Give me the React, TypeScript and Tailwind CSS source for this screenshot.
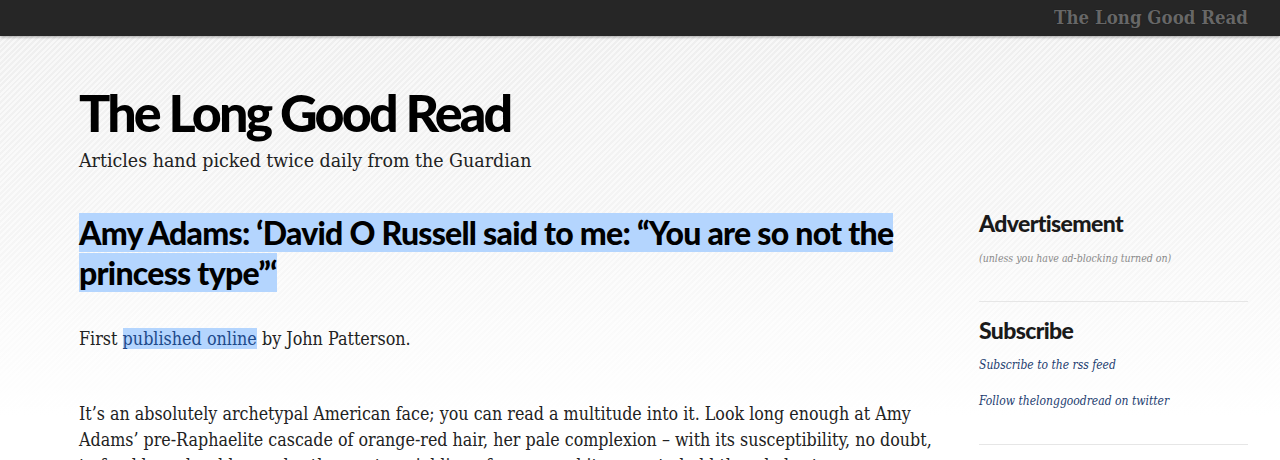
const serif = "font-['DejaVu_Serif_Condensed','DejaVu_Serif',serif] [font-stretch:condensed]";
const sans = "font-['Lato','Open_Sans',sans-serif]";

const sidebar = [
  {
    title: "Advertisement",
    items: [{ text: "(unless you have ad-blocking turned on)", muted: true }],
  },
  {
    title: "Subscribe",
    items: [
      { text: "Subscribe to the rss feed", muted: false },
      { text: "Follow thelonggoodread on twitter", muted: false },
    ],
  },
];

export default function App() {
  return (
    <div className="h-[460px] overflow-hidden bg-[repeating-linear-gradient(135deg,#efefef_0px,#efefef_2px,#f8f8f8_2px,#f8f8f8_4px)]">
      {/* Top bar */}
      <div className="h-9 bg-[#262626] shadow-[0_1px_3px_rgba(0,0,0,0.35)] flex justify-end items-center pr-8">
        <span className={`${serif} font-bold text-[18.5px] text-[#676767] [text-shadow:0_0_1px_rgba(0,0,0,0.6)]`}>
          The Long Good Read
        </span>
      </div>

      <div className="bg-[linear-gradient(to_bottom,rgba(255,255,255,0)_0px,rgba(255,255,255,0.4)_200px,#ffffff_380px)] h-full">
        <div className="pl-[79px] pr-8 pt-[46px]">
          <h1 className={`${sans} font-black text-[52px] leading-[60px] tracking-[-2.8px] text-black`}>
            The Long Good Read
          </h1>
          <p className={`${serif} text-[19.4px] text-[#222] mt-[4px]`}>
            Articles hand picked twice daily from the Guardian
          </p>

          <div className="flex gap-[40px] mt-[38px]">
            {/* Main column */}
            <div className="w-[860px] shrink-0">
              <h2 className={`${sans} font-black text-[32px] leading-[39.5px] tracking-[-0.75px] text-black`}>
                <span className="bg-[#b4d5fe]">
                  Amy Adams: ‘David O Russell said to me: “You are so not the princess type”‘
                </span>
              </h2>
              <p className={`${serif} text-[17.8px] text-[#222] mt-[34px]`}>
                First{" "}
                <a className="text-[#1d4a8a] bg-[#b4d5fe]">published online</a>{" "}
                by John Patterson.
              </p>
              <p className={`${serif} text-[17.7px] leading-[26px] text-[#222] mt-[48px]`}>
                It’s an absolutely archetypal American face; you can read a multitude into it. Look long enough at Amy
                Adams’ pre-Raphaelite cascade of orange-red hair, her pale complexion – with its susceptibility, no doubt,
                to freckle and redden under the most unyielding of suns – and it seems to hold the whole story.
              </p>
            </div>

            {/* Sidebar */}
            <div className="w-[269px] shrink-0 -mt-[4px]">
              {sidebar.map((s) => (
                <div key={s.title} className="border-b border-[#e6e6e6] pb-[32px] mb-[14px]">
                  <h3 className={`${sans} font-black text-[23px] leading-[28px] tracking-[-0.65px] text-[#1a1a1a]`}>
                    {s.title}
                  </h3>
                  <div className="mt-[10px] flex flex-col gap-[14px]">
                    {s.items.map((it) => (
                      <p
                        key={it.text}
                        className={`${serif} italic ${
                          it.muted ? "text-[10.5px] text-[#8a8a8a]" : "text-[12px] text-[#1d3d70]"
                        } leading-[22px]`}
                      >
                        {it.text}
                      </p>
                    ))}
                  </div>
                </div>
              ))}
            </div>
          </div>
        </div>
      </div>
    </div>
  );
}
